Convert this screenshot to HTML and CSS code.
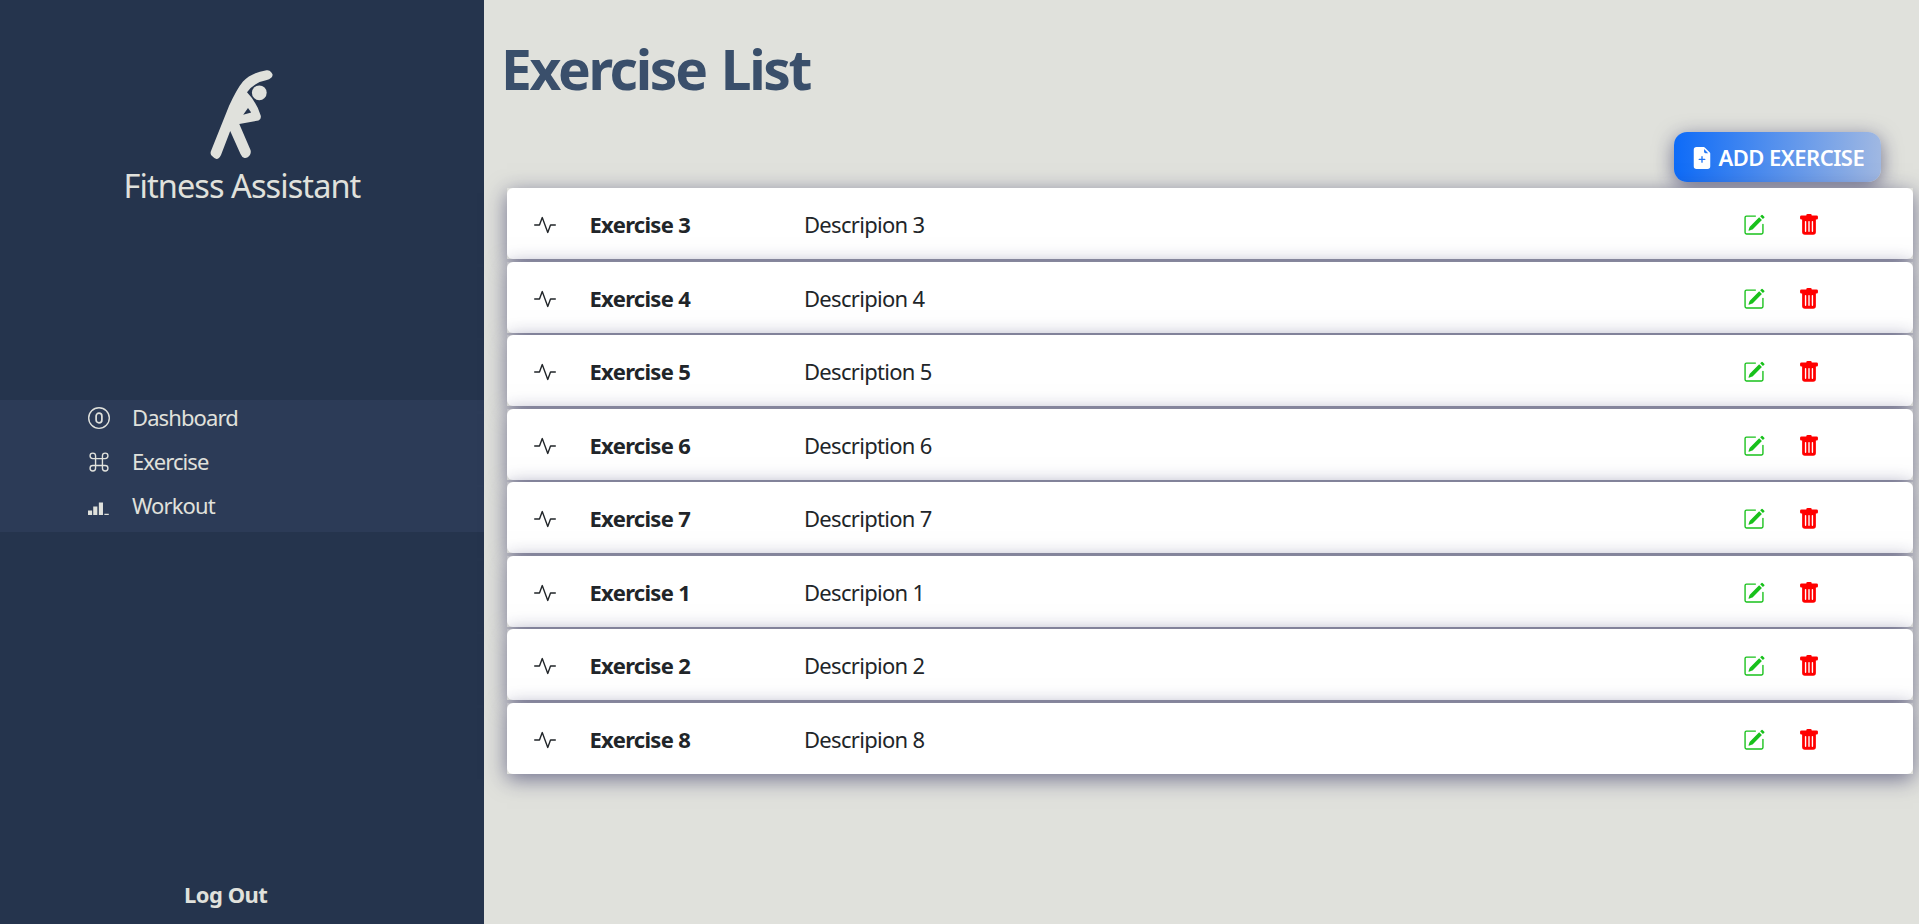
FILE: index.html
```
<!DOCTYPE html>
<html lang="en">
<head>
<meta charset="utf-8">
<title>Fitness Assistant</title>
<link rel="stylesheet" href="styles.css">
</head>
<body>
<svg class="defs" aria-hidden="true">
  <symbol id="activity" viewBox="0 0 16 16"><path fill-rule="evenodd" d="M6 2a.5.5 0 0 1 .47.33L10 12.036l1.53-4.208A.5.5 0 0 1 12 7.5h3.5a.5.5 0 0 1 0 1h-3.15l-1.88 5.17a.5.5 0 0 1-.94 0L6 3.964 4.47 8.171A.5.5 0 0 1 4 8.5H.5a.5.5 0 0 1 0-1h3.15l1.88-5.17A.5.5 0 0 1 6 2Z"/></symbol>
  <symbol id="pencil" viewBox="0 0 16 16"><path d="M15.502 1.94a.5.5 0 0 1 0 .706L14.459 3.69l-2-2L13.502.646a.5.5 0 0 1 .707 0l1.293 1.293zm-1.75 2.456-2-2L4.939 9.21a.5.5 0 0 0-.121.196l-.805 2.414a.25.25 0 0 0 .316.316l2.414-.805a.5.5 0 0 0 .196-.12l6.813-6.814z"/><path fill-rule="evenodd" d="M1 13.5A1.5 1.5 0 0 0 2.5 15h11a1.5 1.5 0 0 0 1.5-1.5v-6a.5.5 0 0 0-1 0v6a.5.5 0 0 1-.5.5h-11a.5.5 0 0 1-.5-.5v-11a.5.5 0 0 1 .5-.5H9a.5.5 0 0 0 0-1H2.5A1.5 1.5 0 0 0 1 2.5v11z"/></symbol>
  <symbol id="trash" viewBox="0 0 16 16"><path d="M2.5 1a1 1 0 0 0-1 1v1a1 1 0 0 0 1 1H3v9a2 2 0 0 0 2 2h6a2 2 0 0 0 2-2V4h.5a1 1 0 0 0 1-1V2a1 1 0 0 0-1-1H10a1 1 0 0 0-1-1H7a1 1 0 0 0-1 1H2.5zm3 4a.5.5 0 0 1 .5.5v7a.5.5 0 0 1-1 0v-7a.5.5 0 0 1 .5-.5zM8 5a.5.5 0 0 1 .5.5v7a.5.5 0 0 1-1 0v-7A.5.5 0 0 1 8 5zm3 .5v7a.5.5 0 0 1-1 0v-7a.5.5 0 0 1 1 0z"/></symbol>
</svg>
<aside class="sidebar">
  <div class="brand">
    <svg class="logo" viewBox="0 0 64 90">
      <path fill="currentColor" fill-rule="evenodd" d="M56.500.300Q59.500-.2 61.200 2.200L62.400 4Q63 6 61.500 7.500Q59.500 9.500 56 10.300Q44 12.500 37 22.300Q46.500 32 50.700 45.500Q51.500 49.500 48.500 50.500L29.300 54L40.500 80Q41.500 83.500 39.200 86Q37 88.500 34.500 88Q32 87.500 30.500 84L20.200 61L11 85Q9 89 6.500 88.900Q4.500 88.700 1.500 85.500Q-.2 83.500 1.200 80.500L19 36Q27 18.500 33 11.500Q41.500 2.500 56.500.300ZM38 38L33.200 44.700L41.200 42.600Z"/>
      <circle cx="49.300" cy="22.800" r="7.400" fill="currentColor"/>
    </svg>
    <span class="brand-name">Fitness Assistant</span>
  </div>
  <nav class="menu">
    <a class="menu-item"><svg class="icon" viewBox="0 0 16 16"><g fill="none" stroke="currentColor"><circle cx="8" cy="8" r="7.500"/><rect x="5.900" y="4.500" width="4.200" height="7" rx="2.100" stroke-width="1.250"/></g></svg><span>Dashboard</span></a>
    <a class="menu-item"><svg class="icon" viewBox="0 0 16 16"><path d="M3.500 2A1.500 1.500 0 0 1 5 3.500V5H3.500a1.500 1.500 0 1 1 0-3zM6 5V3.500A2.500 2.500 0 1 0 3.500 6H5v4H3.500A2.500 2.500 0 1 0 6 12.500V11h4v1.500a2.500 2.500 0 1 0 2.500-2.500H11V6h1.500A2.500 2.500 0 1 0 10 3.500V5H6zm4 1v4H6V6h4zm1-1V3.500A1.500 1.500 0 1 1 12.500 5H11zm0 6h1.500a1.500 1.500 0 1 1-1.500 1.500V11zm-6 0v1.500A1.500 1.500 0 1 1 3.500 11H5z"/></svg><span>Exercise</span></a>
    <a class="menu-item"><svg class="icon" viewBox="0 0 16 16"><path d="M0 11.200h3v3.300H0zM3.800 8.300h3v6.200h-3zM7.900 5.400h3v9.100h-3zM11.900 13.700h3.200v.8h-3.200z"/></svg><span>Workout</span></a>
  </nav>
  <a class="logout">Log Out</a>
</aside>
<main class="content">
  <h1 class="title">Exercise List</h1>
  <div class="toolbar">
    <button class="add"><svg class="icon" viewBox="0 0 16 16"><path d="M9.293 0H4a2 2 0 0 0-2 2v12a2 2 0 0 0 2 2h8a2 2 0 0 0 2-2V4.707A1 1 0 0 0 13.707 4L10 .293A1 1 0 0 0 9.293 0zM9.500 3.500v-2l3 3h-2a1 1 0 0 1-1-1zM8.500 7v1.500H10a.5.5 0 0 1 0 1H8.500V11a.5.5 0 0 1-1 0V9.500H6a.5.5 0 0 1 0-1h1.500V7a.5.5 0 0 1 1 0z"/></svg><span>ADD EXERCISE</span></button>
  </div>
  <div class="list">
    <div class="row"><div class="card"><svg class="icon"><use href="#activity"/></svg><b class="name">Exercise 3</b><span class="desc">Descripion 3</span><svg class="icon edit"><use href="#pencil"/></svg><svg class="icon remove"><use href="#trash"/></svg></div></div>
    <div class="row"><div class="card"><svg class="icon"><use href="#activity"/></svg><b class="name">Exercise 4</b><span class="desc">Descripion 4</span><svg class="icon edit"><use href="#pencil"/></svg><svg class="icon remove"><use href="#trash"/></svg></div></div>
    <div class="row"><div class="card"><svg class="icon"><use href="#activity"/></svg><b class="name">Exercise 5</b><span class="desc">Description 5</span><svg class="icon edit"><use href="#pencil"/></svg><svg class="icon remove"><use href="#trash"/></svg></div></div>
    <div class="row"><div class="card"><svg class="icon"><use href="#activity"/></svg><b class="name">Exercise 6</b><span class="desc">Description 6</span><svg class="icon edit"><use href="#pencil"/></svg><svg class="icon remove"><use href="#trash"/></svg></div></div>
    <div class="row"><div class="card"><svg class="icon"><use href="#activity"/></svg><b class="name">Exercise 7</b><span class="desc">Description 7</span><svg class="icon edit"><use href="#pencil"/></svg><svg class="icon remove"><use href="#trash"/></svg></div></div>
    <div class="row"><div class="card"><svg class="icon"><use href="#activity"/></svg><b class="name">Exercise 1</b><span class="desc">Descripion 1</span><svg class="icon edit"><use href="#pencil"/></svg><svg class="icon remove"><use href="#trash"/></svg></div></div>
    <div class="row"><div class="card"><svg class="icon"><use href="#activity"/></svg><b class="name">Exercise 2</b><span class="desc">Descripion 2</span><svg class="icon edit"><use href="#pencil"/></svg><svg class="icon remove"><use href="#trash"/></svg></div></div>
    <div class="row"><div class="card"><svg class="icon"><use href="#activity"/></svg><b class="name">Exercise 8</b><span class="desc">Descripion 8</span><svg class="icon edit"><use href="#pencil"/></svg><svg class="icon remove"><use href="#trash"/></svg></div></div>
  </div>
</main>
</body>
</html>
```
FILE: styles.css
```
* { box-sizing: border-box; }
body {
  margin: 0;
  height: 924px;
  display: flex;
  overflow: hidden;
  background: #e0e1dc;
  color: #212529;
  font: 22px/35px "Noto Sans", "Open Sans", sans-serif;
  white-space: nowrap;
}
.defs { display: none; }
.icon { width: 22px; height: 22px; flex: none; fill: currentColor; }
.sidebar {
  width: 484px;
  flex: none;
  display: flex;
  flex-direction: column;
  background: #25344d;
  color: #e0e1dc;
}
.brand {
  height: 400px;
  padding-top: 70px;
  display: flex;
  flex-direction: column;
  align-items: center;
}
.logo { width: 64px; height: 90px; }
.brand-name { margin-top: 2px; font-size: 32.5px; line-height: 48px; letter-spacing: -0.93px; }
.menu { height: 132px; background: #2c3b57; }
.menu-item { display: flex; gap: 22px; height: 44px; padding-left: 88px; letter-spacing: -0.9px; }
.menu-item .icon { margin-top: 7px; }
.logout { margin: auto 0 12px 184px; font-weight: 700; letter-spacing: -0.5px; }
.content { flex: 1; padding: 30px 6px 0 17px; }
.title {
  margin: 0;
  height: 102px;
  color: #3a4f6b;
  font-size: 55px;
  line-height: 78px;
  letter-spacing: -2.3px;
  word-spacing: 3px;
}
.toolbar { display: flex; justify-content: flex-end; padding: 0 32px 6px 0; }
.add {
  width: 207px;
  height: 50px;
  padding: 0 0 0 16.500px;
  display: flex;
  align-items: center;
  gap: 6px;
  border: 0;
  border-radius: 13px;
  background: linear-gradient(90deg, #0d6bf8, #a0b8e2);
  box-shadow: 0 5px 20px rgba(25, 25, 80, .56);
  color: #fff;
  font: 600 22px/35px "Noto Sans", "Open Sans", sans-serif;
  letter-spacing: -0.53px;
}
.add .icon { margin-top: 2px; }
.list { margin-left: 6px; display: flex; flex-direction: column; gap: 2.2px; }
.row { height: 71.33px; box-shadow: 0 5px 20px rgba(25, 25, 80, .56); }
.card {
  height: 100%;
  display: flex;
  align-items: center;
  padding: 2px 93px 0 27px;
  border-radius: 6px;
  background: #fff;
}
.card .icon { margin-top: 1px; }
.name { width: 214.500px; margin-left: 33.500px; letter-spacing: -0.7px; }
.desc { flex: 1; letter-spacing: -0.7px; }
.edit { color: #18c11b; }
.remove { margin-left: 33px; color: #f00; }
```
